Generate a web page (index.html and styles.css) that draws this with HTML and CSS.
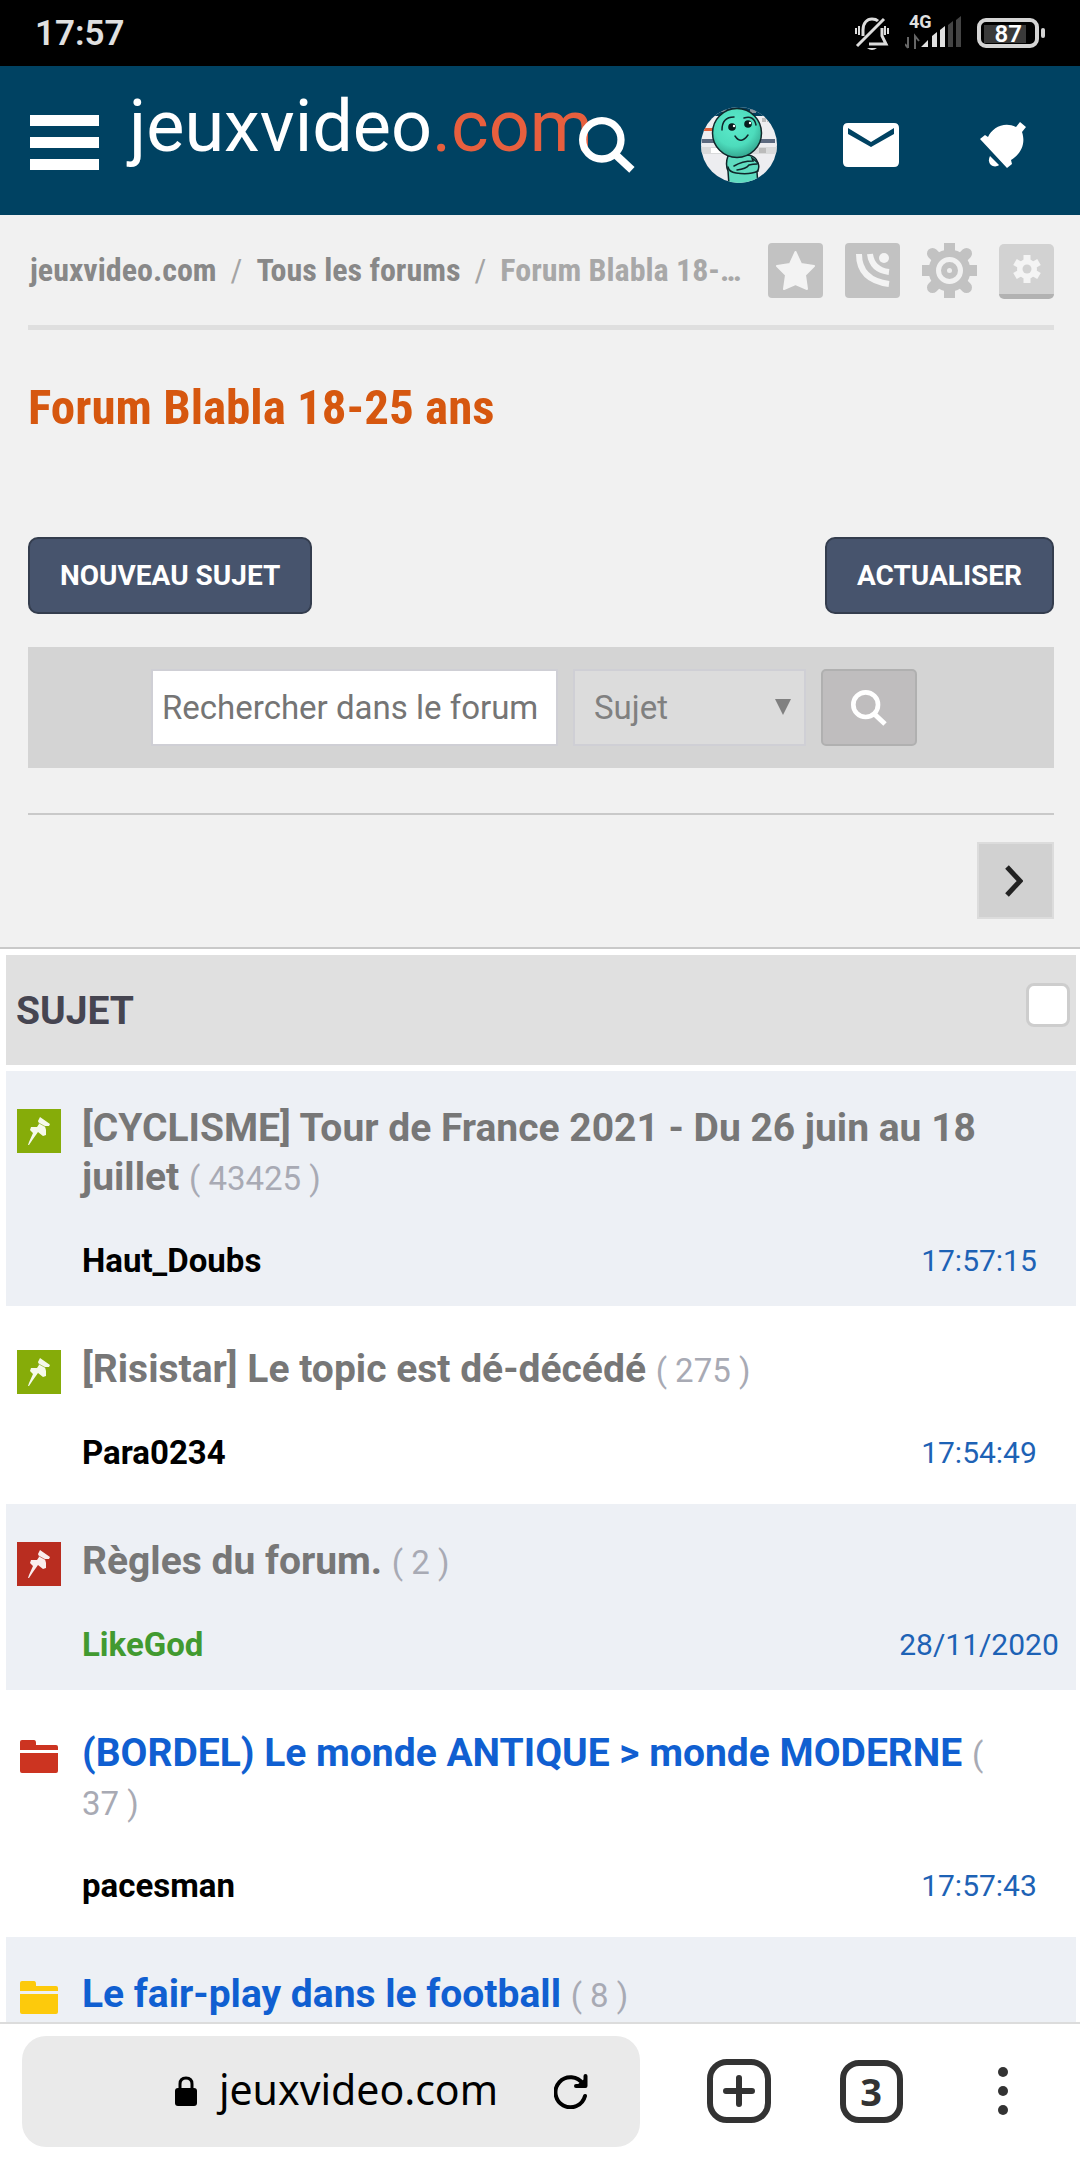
FILE: index.html
```html
<!DOCTYPE html>
<html lang="fr">
<head>
  <meta charset="UTF-8">
  <meta name="viewport" content="width=device-width, initial-scale=1.0">
  <title>Forum Blabla 18-25 ans - jeuxvideo.com</title>
  <link rel="stylesheet" href="styles.css">
</head>
<body>
  <!-- icons used several times -->
  <svg class="sprite" aria-hidden="true">
    <symbol id="pin" viewBox="0 0 44 44">
      <path d="M23 8l10 7-1 2-4 0 1 4 0 5-3 1-5-4-5 7-4 6-1 0 1-3 4-9-3-3 1-3 6 0 2-3-1-3z" fill="#fff" opacity=".92"/>
      <path d="M20 13l9 5" stroke="currentColor" stroke-width="1" opacity=".6"/>
    </symbol>
    <symbol id="folder" viewBox="0 0 44 44">
      <path d="M3 16V8q0-2 2-2h12q2 0 2 3v2h20q2 0 2 2v3zM3 19h38v18q0 2-2 2H5q-2 0-2-2z" fill="currentColor"/>
    </symbol>
    <symbol id="loupe" viewBox="0 0 54 54">
      <circle cx="22" cy="22" r="18.500" fill="none" stroke="#fff" stroke-width="7"/>
      <path d="M35 36l16 15" stroke="#fff" stroke-width="7.500"/>
    </symbol>
  </svg>

  <div class="status">
    <span class="time">17:57</span>
    <div class="status-icons">
      <svg class="mute" width="34" height="34" viewBox="0 0 34 34" fill="none" stroke="#dcdcdc" stroke-width="3">
        <path d="M8 20v-6C8 7 12 3 17 3q4 0 6 2M27 12v8l4 8H14M2 30L29 3"/>
        <path d="M12 32h10q-5 4-10 0z" fill="#dcdcdc" stroke="none"/>
        <path d="M1 12v6M4 10v9M30 10v9M33 12v6" stroke-width="2"/>
      </svg>
      <div class="signal">
        <span class="net">4G</span>
        <svg width="56" height="34" viewBox="0 0 56 34">
          <path d="M3 21v11M10 33V20l4 5M3 32l-3-4" stroke="#666" stroke-width="2" fill="none"/>
          <path d="M16 31l7-7v7zM27 20l5-4v15h-5zM35 14l5-4v21h-5z" fill="#e0e0e0"/>
          <path d="M43 9l5-4v26h-5zM51 4l5-4v31h-5z" fill="#444"/>
        </svg>
      </div>
      <div class="battery"><span>87</span></div>
    </div>
  </div>

  <header class="header">
    <button class="burger" aria-label="Menu"><i></i><i></i><i></i></button>
    <a class="logo" href="#">jeuxvideo<span>.com</span></a>
    <nav class="header-nav">
      <a href="#" aria-label="Rechercher"><svg width="56" height="56" viewBox="0 0 54 54"><use href="#loupe"/></svg></a>
      <a href="#" aria-label="Mon compte">
        <svg width="76" height="76" viewBox="0 0 76 76">
          <defs>
            <clipPath id="round"><circle cx="38" cy="38" r="38"/></clipPath>
            <radialGradient id="skin" cx=".45" cy=".35" r=".7">
              <stop offset="0" stop-color="#5cebcb"/><stop offset=".6" stop-color="#4ddcbc"/><stop offset="1" stop-color="#2f9c87"/>
            </radialGradient>
          </defs>
          <g clip-path="url(#round)">
            <path fill="#ededf0" d="M0 0h76v76H0z"/>
            <path fill="#00405f" d="M0 0h76v9H0z"/>
            <path fill="#8895a0" d="M17 3h8v2h-8zM49 2h6v4h-6z"/>
            <path fill="#d9dadb" d="M0 40h76v7H0z"/>
            <path fill="#5d6a80" d="M1 32h13v4H1zM59 32h15v4H59z"/>
            <path fill="#e0603c" d="M2 21h10v3H2z"/>
            <path fill="#fff" d="M10 41h14v5H10z"/>
            <path fill="#bbb" d="M58 41h7v5h-7zM61 11h4v4h-4zM66 11h4v4h-4z"/>
            <g stroke="#10262a" stroke-width="1.500" stroke-linecap="round">
              <path fill="#5fdcc0" d="M27 49q-3 8 0 15l1 14h29l-1-13q3-4 1-9-2-7-10-8z"/>
              <path fill="none" d="M27 60q1 5 8 6 14 2 22-2M33 59q8-5 19-5l-1-3 6 5M36 63q9-1 12-5 4-1 8-1"/>
              <circle cx="36" cy="26" r="24.500" fill="url(#skin)"/>
              <path fill="none" d="M21 23q0-13 12-13M43 11q10-3 12 7M34 29q6 9 13-1"/>
            </g>
            <circle cx="31" cy="20" r="3.800" fill="#071a1c"/>
            <circle cx="47" cy="17" r="3.800" fill="#071a1c"/>
            <circle cx="33" cy="19" r="1.200" fill="#fff"/>
            <circle cx="49" cy="16" r="1.200" fill="#fff"/>
          </g>
        </svg>
      </a>
      <a href="#" aria-label="Messages">
        <svg width="58" height="46" viewBox="0 0 58 46">
          <path fill="#fff" d="M6 1h46q5 0 5 5v34q0 5-5 5H6q-5 0-5-5V6q0-5 5-5z"/>
          <path fill="#004262" d="M6 6l23 14L52 6v6L29 25 6 12z"/>
        </svg>
      </a>
      <a href="#" aria-label="Notifications">
        <svg width="46" height="46" viewBox="0 0 46 46" fill="#fff">
          <path d="M0 17l5-4 3 2C12 6 24-1 36 5l4-5 6 5-4 5c4 12-1 22-11 28l1 4-5 4z"/>
          <path d="M10 34l9 9c-5 4-13-1-9-9z"/>
        </svg>
      </a>
    </nav>
  </header>

  <main class="page">
    <section class="top">
      <div class="crumbs">
        <nav class="crumb-path">
          <a href="#">jeuxvideo.com</a><span class="sep">/</span><a href="#">Tous les forums</a><span class="sep">/</span><span class="here">Forum Blabla 18-…</span>
        </nav>
        <div class="tools">
          <button aria-label="Favoris"><svg width="55" height="55" viewBox="0 0 55 55"><rect width="55" height="55" rx="4" fill="#c2c2c2"/><path fill="#f3f3f3" stroke="#f3f3f3" stroke-width="2" stroke-linejoin="round" d="M27.500 9l5.500 12 13 2-9 9 2 14-11.500-5L16 46l2-14-9-9 13-2z"/></svg></button>
          <button aria-label="Flux"><svg width="55" height="55" viewBox="0 0 55 55"><rect width="55" height="55" rx="4" fill="#c2c2c2"/><g fill="none" stroke="#f3f3f3" stroke-width="6"><path d="M14 11q0 26 30 30M25 11q2 16 19 18"/></g><circle cx="39" cy="15" r="5" fill="#f3f3f3"/></svg></button>
          <button aria-label="Options">
            <svg width="55" height="55" viewBox="-27.500 -27.500 55 55">
              <g stroke="#c2c2c2" stroke-width="11"><path d="M0-27.500v55M-27.500 0h55"/><path d="M-17-17l34 34M-17 17l34-34" stroke-linecap="round"/></g>
              <circle r="21" fill="#c2c2c2"/><circle r="11" fill="#c2c2c2" stroke="#f1f1f1" stroke-width="5"/><circle r="2.500" fill="#eee"/>
            </svg>
          </button>
          <button class="tool-key" aria-label="Réglages">
            <svg width="30" height="30" viewBox="-15 -15 30 30">
              <path d="M0-14v28M-12-7l24 14M-12 7l24-14" stroke="#f4f4f4" stroke-width="7"/>
              <circle r="10" fill="#f4f4f4"/><circle r="4.500" fill="#d2d2d2"/>
            </svg>
          </button>
        </div>
      </div>

      <h1>Forum Blabla 18-25 ans</h1>

      <div class="actions">
        <button class="btn">NOUVEAU SUJET</button>
        <button class="btn">ACTUALISER</button>
      </div>

      <form class="search">
        <input type="text" aria-label="Rechercher dans le forum" placeholder="Rechercher dans le forum">
        <div class="select">
          <select aria-label="Type de recherche"><option>Sujet</option><option>Auteur</option></select>
          <svg width="16" height="16" viewBox="0 0 16 16"><path d="M0 0h16L8 16z" fill="#808080"/></svg>
        </div>
        <button type="button" aria-label="Lancer la recherche"><svg width="36" height="36" viewBox="0 0 54 54"><use href="#loupe"/></svg></button>
      </form>

      <div class="pager">
        <a href="#" aria-label="Page suivante"><svg width="18" height="32" viewBox="0 0 18 32"><path d="M2 2l13 14L2 30" fill="none" stroke="#222" stroke-width="5"/></svg></a>
      </div>
    </section>

    <div class="topics">
      <div class="topics-head">
        <h2>SUJET</h2>
        <input type="checkbox" aria-label="Tout sélectionner">
      </div>
      <ul>
        <li class="topic">
          <svg class="ico pin-on"><use href="#pin"/></svg>
          <p class="title"><a class="read" href="#">[CYCLISME] Tour de France 2021 - Du 26 juin au 18 juillet</a> <span>( 43425 )</span></p>
          <a class="author" href="#">Haut_Doubs</a>
          <a class="date" href="#">17:57:15</a>
        </li>
        <li class="topic">
          <svg class="ico pin-on"><use href="#pin"/></svg>
          <p class="title"><a class="read" href="#">[Risistar] Le topic est dé-décédé</a> <span>( 275 )</span></p>
          <a class="author" href="#">Para0234</a>
          <a class="date" href="#">17:54:49</a>
        </li>
        <li class="topic">
          <svg class="ico pin-off"><use href="#pin"/></svg>
          <p class="title"><a class="read" href="#">Règles du forum.</a> <span>( 2 )</span></p>
          <a class="author modo" href="#">LikeGod</a>
          <a class="date" href="#">28/11/2020</a>
        </li>
        <li class="topic">
          <svg class="ico folder-red"><use href="#folder"/></svg>
          <p class="title"><a href="#">(BORDEL) Le monde ANTIQUE &gt; monde MODERNE</a> <span>( 37 )</span></p>
          <a class="author" href="#">pacesman</a>
          <a class="date" href="#">17:57:43</a>
        </li>
        <li class="topic">
          <svg class="ico folder-yellow"><use href="#folder"/></svg>
          <p class="title"><a href="#">Le fair-play dans le football</a> <span>( 8 )</span></p>
        </li>
      </ul>
    </div>
  </main>

  <footer class="browser">
    <div class="url">
      <svg width="22" height="30" viewBox="0 0 22 30"><path d="M5 14V8q0-6 6-6t6 6v6" fill="none" stroke="#000" stroke-width="3"/><rect y="12" width="22" height="18" rx="3"/></svg>
      <span>jeuxvideo.com</span>
      <button aria-label="Recharger"><svg width="34" height="36" viewBox="0 0 34 36" fill="none" stroke="#000" stroke-width="4" stroke-linecap="round" stroke-linejoin="round"><path d="M31 23a15 15 0 1 1-2-12M31.500 3v10H22"/><path d="M26 12l5-4"/></svg></button>
    </div>
    <button class="bar-btn" aria-label="Nouvel onglet"><svg width="64" height="64" viewBox="0 0 64 64" fill="none" stroke="#333"><rect x="3" y="3" width="58" height="58" rx="17" stroke-width="6"/><path d="M32 19v26M19 32h26" stroke-width="6" stroke-linecap="round"/></svg></button>
    <button class="bar-btn tabs" aria-label="Onglets"><span>3</span></button>
    <button class="bar-btn" aria-label="Plus"><svg width="10" height="50" viewBox="0 0 10 50" fill="#333"><circle cx="5" cy="6" r="5"/><circle cx="5" cy="25" r="5"/><circle cx="5" cy="44" r="5"/></svg></button>
  </footer>
</body>
</html>
```
FILE: styles.css
```css
* {
  box-sizing: border-box;
}
html, body {
  margin: 0;
  height: 100%;
}
body {
  display: flex;
  flex-direction: column;
  background: #fff;
  font-family: Roboto, sans-serif;
  font-size: 33px;
  overflow: hidden;
}
a {
  color: inherit;
  text-decoration: none;
}
button {
  border: none;
  background: none;
  padding: 0;
  font-family: inherit;
  cursor: pointer;
}
svg {
  display: block;
}
.sprite {
  position: absolute;
  width: 0;
  height: 0;
}

/* phone status bar */
.status {
  flex: none;
  display: flex;
  justify-content: space-between;
  align-items: center;
  height: 66px;
  padding: 0 35px;
  background: #000;
  color: #e0e0e0;
}
.time {
  font-size: 35px;
  font-weight: 600;
}
.status-icons {
  display: flex;
  align-items: center;
  gap: 16px;
}
.signal {
  position: relative;
}
.net {
  position: absolute;
  left: 4px;
  top: -4px;
  font-size: 18px;
  line-height: 20px;
  font-weight: 700;
}
.battery {
  position: relative;
  width: 62px;
  height: 30px;
  margin-right: 6px;
  border: 4px solid #d4d4d4;
  border-radius: 9px;
  padding: 3px;
}
.battery::after {
  content: "";
  position: absolute;
  right: -10px;
  top: 6px;
  width: 4px;
  height: 10px;
  border-radius: 2px;
  background: #d4d4d4;
}
.battery span {
  display: block;
  margin-right: 6px;
  background: #3a3a3a;
  font-size: 24px;
  line-height: 18px;
  font-weight: 600;
  text-align: right;
  padding-right: 4px;
  color: #fff;
}

/* site header */
.header {
  flex: none;
  display: flex;
  align-items: center;
  height: 149px;
  padding: 0 11px 0 30px;
  background: #004262;
}
.burger {
  display: flex;
  flex-direction: column;
  gap: 11px;
  width: 69px;
  padding-top: 4px;
}
.burger i {
  height: 11px;
  background: #fff;
}
.logo {
  flex: 1;
  min-width: 0;
  padding: 0 0 28px 30px;
  font-size: 72px;
  line-height: 84px;
  white-space: nowrap;
  color: #fff;
}
.logo span {
  color: #e75f3e;
}
.header-nav {
  display: flex;
  padding-top: 8px;
}
.header-nav a {
  position: relative;
  display: flex;
  justify-content: center;
  align-items: center;
  width: 132px;
  height: 80px;
}

/* forum top */
.page {
  flex: 1;
  min-height: 0;
  overflow: hidden;
}
.top {
  background: #f1f1f1;
  padding: 0 26px 28px 28px;
  border-bottom: 2px solid #c9c9c9;
}
.crumbs {
  display: flex;
  align-items: center;
  gap: 22px;
  height: 115px;
  border-bottom: 5px solid #dfdfdf;
}
.crumb-path, h1 {
  font-family: 'Roboto Condensed', 'Liberation Sans Narrow', Roboto, sans-serif;
  font-weight: 700;
}
.crumb-path {
  flex: 1;
  min-width: 0;
  padding-left: 2px;
  font-size: 32px;
  line-height: 40px;
  color: #888;
  white-space: nowrap;
}
.sep {
  margin: 0 14px;
  font-weight: 400;
  color: #a4a4a4;
}
.here {
  color: #a8a8a8;
}
.tools {
  display: flex;
  gap: 22px;
}
.tool-key {
  display: flex;
  justify-content: center;
  align-items: center;
  width: 55px;
  height: 55px;
  margin-top: 3px;
  border-radius: 5px;
  border-bottom: 5px solid #b2b2b2;
  background: #d2d2d2;
}
h1 {
  margin: 47px 0 99px;
  font-size: 49px;
  line-height: 61px;
  color: #d6570f;
}
.actions {
  display: flex;
  justify-content: space-between;
}
.btn {
  height: 77px;
  padding: 0 30px;
  border: 2px solid #343d4e;
  border-radius: 10px;
  background: #47546d;
  color: #fff;
  font-size: 28px;
  font-weight: 700;
}
.search {
  display: flex;
  justify-content: center;
  gap: 15px;
  margin-top: 33px;
  padding: 22px 14px 22px 0;
  background: #d4d4d4;
}
.search input, .search select {
  height: 77px;
  border: 2px solid #cfcfd5;
  border-radius: 0;
  font-family: inherit;
  font-size: 33px;
}
.search input {
  width: 407px;
  padding: 0 9px;
  background: #fff;
}
.search input::placeholder {
  color: #757575;
}
.select {
  position: relative;
}
.search select {
  appearance: none;
  width: 233px;
  padding: 0 19px;
  background: #dcdcdc;
  color: #808080;
}
.select svg {
  position: absolute;
  right: 15px;
  top: 30px;
  pointer-events: none;
}
.search button {
  display: flex;
  justify-content: center;
  align-items: center;
  width: 96px;
  height: 77px;
  border: 2px solid #b0b0b0;
  border-radius: 5px;
  background: #bfbdbe;
}
.pager {
  display: flex;
  justify-content: flex-end;
  margin-top: 45px;
  padding-top: 27px;
  border-top: 2px solid #c9c9c9;
}
.pager a {
  display: flex;
  justify-content: center;
  align-items: center;
  width: 77px;
  height: 77px;
  padding-right: 3px;
  border: 2px solid #dcdcdc;
  background: #d1d1d1;
}

/* topic list */
.topics {
  padding: 6px 4px 0 6px;
}
.topics-head {
  display: flex;
  justify-content: space-between;
  align-items: center;
  height: 110px;
  padding: 0 6px 0 10px;
  background: #e0e0e0;
}
.topics h2 {
  margin: 0;
  padding-top: 2px;
  font-size: 39px;
  font-weight: 700;
  color: #464551;
}
.topics-head input {
  appearance: none;
  width: 44px;
  height: 44px;
  margin: 0 0 10px;
  border: 3px solid #cdcdcd;
  border-radius: 8px;
  background: #fff;
}
.topics ul {
  display: flex;
  flex-direction: column;
  gap: 6px;
  margin: 6px 0 0;
  padding: 0;
  list-style: none;
}
.topic {
  display: grid;
  grid-template-columns: 65px 1fr 194px;
  row-gap: 36px;
  align-items: center;
  padding: 33px 0 23px 11px;
}
.topic:nth-child(odd) {
  background: #edf0f5;
}
.ico {
  width: 44px;
  height: 44px;
  margin-top: 5px;
  align-self: start;
}
.pin-on {
  background: #86ac09;
  color: #86ac09;
}
.pin-off {
  background: #b92d20;
  color: #b92d20;
}
.folder-red {
  color: #cc3421;
}
.folder-yellow {
  color: #fdca0c;
}
.title {
  grid-column: 2 / 4;
  margin: 0;
  padding-right: 66px;
  font-size: 39px;
  line-height: 49px;
}
.title a {
  font-weight: 700;
  color: #105fd1;
}
.title .read {
  color: #777;
}
.title span {
  font-size: 33px;
  line-height: 33px;
  color: #a8aab4;
}
.author {
  grid-column: 2;
  line-height: 45px;
  font-weight: 700;
  color: #000;
}
.modo {
  color: #429a30;
}
.date {
  font-size: 30px;
  line-height: 45px;
  text-align: center;
  color: #1d62b5;
}

/* browser bar */
.browser {
  flex: none;
  display: flex;
  align-items: center;
  height: 138px;
  padding: 0 11px 2px 22px;
  border-top: 2px solid #dcdcdc;
  background: #fff;
}
.url {
  flex: 1;
  display: flex;
  justify-content: flex-end;
  align-items: center;
  height: 111px;
  margin-right: 33px;
  padding-right: 52px;
  border-radius: 24px;
  background: #eaeaea;
  color: #000;
  font-family: 'Noto Sans', sans-serif;
  font-size: 41px;
}
.url span {
  margin: 0 56px 0 22px;
  padding-bottom: 4px;
}
.bar-btn {
  display: flex;
  justify-content: center;
  align-items: center;
  width: 132px;
  height: 80px;
}
.tabs span {
  width: 63px;
  height: 63px;
  border: 6px solid #333;
  border-radius: 19px;
  color: #333;
  font-family: 'Noto Sans', sans-serif;
  font-size: 38px;
  line-height: 51px;
  font-weight: 700;
}
```
